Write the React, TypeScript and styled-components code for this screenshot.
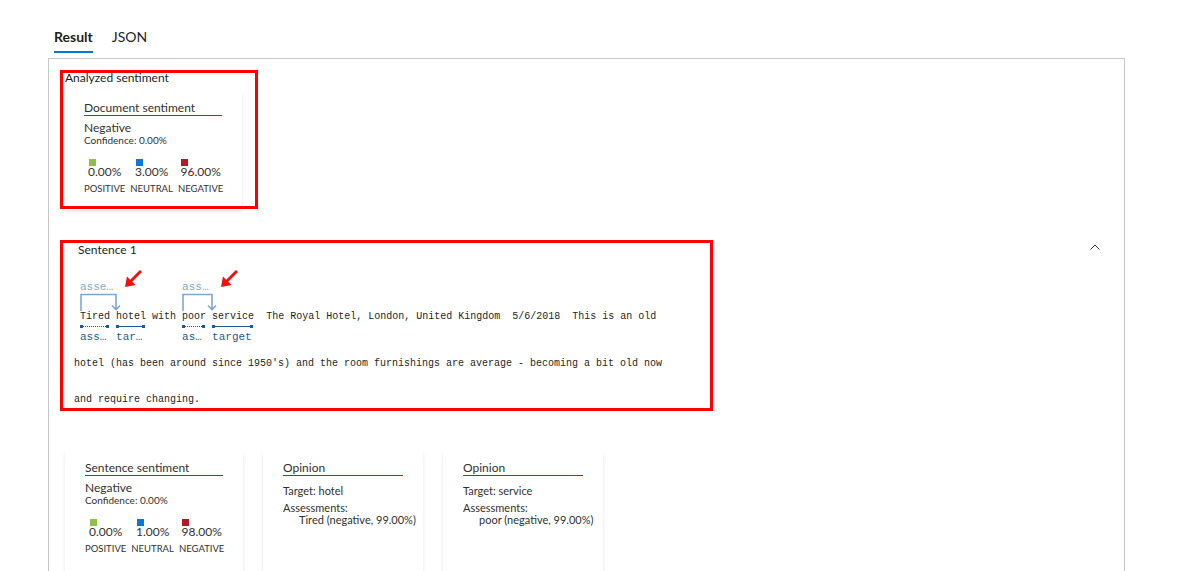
import styled, { createGlobalStyle } from 'styled-components';

const GlobalStyle = createGlobalStyle`
  body {
    margin: 0;
    background: #fff;
    color: #323130;
    font-family: Lato, "Open Sans", sans-serif;
  }
`;

interface Score {
  label: string;
  value: string;
  color: string;
}

const docScores: Score[] = [
  { label: 'POSITIVE', value: '0.00%', color: '#8cc24a' },
  { label: 'NEUTRAL', value: '3.00%', color: '#0b78d4' },
  { label: 'NEGATIVE', value: '96.00%', color: '#b01c24' },
];

const sentenceScores: Score[] = [
  { label: 'POSITIVE', value: '0.00%', color: '#8cc24a' },
  { label: 'NEUTRAL', value: '1.00%', color: '#0b78d4' },
  { label: 'NEGATIVE', value: '98.00%', color: '#b01c24' },
];

// monospace char width at 10px
const CHAR = 6;

const SentimentCard = ({ title, scores }: { title: string; scores: Score[] }) => (
  <Card width={178}>
    <CardTitle>{title}</CardTitle>
    <Verdict>Negative</Verdict>
    <Confidence>Confidence: 0.00%</Confidence>
    <Scores>
      {scores.map((s) => (
        <ScoreCol key={s.label}>
          <ScoreValue>
            <Swatch color={s.color} />
            <span>{s.value}</span>
          </ScoreValue>
          <ScoreLabel>{s.label}</ScoreLabel>
        </ScoreCol>
      ))}
    </Scores>
  </Card>
);

const OpinionCard = ({ target, assessment }: { target: string; assessment: string }) => (
  <Card width={160}>
    <CardTitle>Opinion</CardTitle>
    <Target>Target: {target}</Target>
    <AssessTitle>Assessments:</AssessTitle>
    <AssessItem>{assessment} (negative, 99.00%)</AssessItem>
  </Card>
);

const Token = ({ word, label, dotted }: { word: string; label: string; dotted?: boolean }) => (
  <TokenBox>
    <span>{word}</span>
    <Bar>
      <Dot />
      <BarLine dotted={dotted} />
      <Dot />
    </Bar>
    <TokenLabel width={word.length * CHAR}>{label}</TokenLabel>
  </TokenBox>
);

const Relation = ({ from, to }: { from: string; to: string }) => {
  const dx = from.length * CHAR + CHAR;
  return (
    <RelationBox>
      <RelLabel width={dx}>assessment</RelLabel>
      <Bracket width={dx + 6} height={18}>
        <path
          d={`M1 18 V1.5 H${dx} V16.5 M${dx - 4} 12.5 L${dx} 16.5 L${dx + 4} 12.5`}
          fill="none"
          stroke="#7ea8d2"
          strokeWidth={1.6}
        />
      </Bracket>
      <RelWords>
        <Token word={from} label="assessment" dotted />
        <span> </span>
        <Token word={to} label="target" />
      </RelWords>
      <Pointer offset={dx + 8} width={18} height={18} viewBox="0 0 18 18">
        <line x1={6} y1={12} x2={17} y2={1} stroke="#f01010" strokeWidth={3} />
        <polygon points="1,17 3,6.5 11.5,15" fill="#f01010" />
      </Pointer>
    </RelationBox>
  );
};

const App = () => {
  return (
    <>
      <GlobalStyle />
      <Page>
        <Tabs>
          <Tab active>Result</Tab>
          <Tab>JSON</Tab>
        </Tabs>
        <Panel>
          <Section>
            <Highlight left={-4} top={0} width={198} height={139} />
            <SectionHeading>Analyzed sentiment</SectionHeading>
            <SentimentCard title="Document sentiment" scores={docScores} />
          </Section>

          <SentenceSection>
            <Highlight left={-4} top={0} width={653} height={171} />
            <SentenceHeader>
              <span>Sentence 1</span>
              <Chevron width={10} height={6} viewBox="0 0 10 6">
                <polyline points="0.5,5.5 5,1 9.5,5.5" fill="none" stroke="#323130" strokeWidth={1} />
              </Chevron>
            </SentenceHeader>
            <MonoText>
              <FirstLine>
                <Plain> </Plain>
                <Relation from="Tired" to="hotel" />
                <Plain> with </Plain>
                <Relation from="poor" to="service" />
                <Plain>{'  The Royal Hotel, London, United Kingdom  5/6/2018  This is an old'}</Plain>
              </FirstLine>
              <Rest>
                hotel (has been around since 1950's) and the room furnishings are average - becoming a bit old now
                <br />
                and require changing.
              </Rest>
            </MonoText>
          </SentenceSection>

          <CardRow>
            <SentimentCard title="Sentence sentiment" scores={sentenceScores} />
            <OpinionCard target="hotel" assessment="Tired" />
            <OpinionCard target="service" assessment="poor" />
          </CardRow>
        </Panel>
      </Page>
    </>
  );
};

export default App;

const Page = styled.div`
  padding-top: 28px;
  height: 571px;
  overflow: hidden;
  box-sizing: border-box;
`;

const Tabs = styled.div`
  display: flex;
  gap: 19px;
  margin-left: 54px;
`;

const Tab = styled.div<{ active?: boolean }>`
  font-size: 14px;
  line-height: 18px;
  font-weight: ${({ active }) => (active ? 700 : 400)};
  color: #201f1e;
  padding-bottom: 5px;
  border-bottom: 2px solid ${({ active }) => (active ? '#0078d4' : 'transparent')};
`;

const Panel = styled.div`
  margin: 5px 0 0 48px;
  width: 1077px;
  box-sizing: border-box;
  border: 1px solid #c8c8c8;
  border-bottom: none;
  padding: 11px 0 40px 15px;
`;

const Section = styled.div`
  position: relative;
`;

// red annotation boxes drawn over the screenshot
const Highlight = styled.div<{ left: number; top: number; width: number; height: number }>`
  position: absolute;
  left: ${({ left }) => left}px;
  top: ${({ top }) => top}px;
  width: ${({ width }) => width}px;
  height: ${({ height }) => height}px;
  box-sizing: border-box;
  border: 3px solid #ff0000;
  pointer-events: none;
  z-index: 2;
`;

const SectionHeading = styled.div`
  font-size: 12px;
  line-height: 16px;
  color: #201f1e;
  margin: 0 0 6px 1px;
`;

const Card = styled.div<{ width: number }>`
  width: ${({ width }) => width}px;
  min-height: 118px;
  box-sizing: border-box;
  padding: 8px 20px 15px;
  background: #fff;
  box-shadow: 0 1.6px 3.6px rgba(0, 0, 0, 0.1), 0 0.3px 0.9px rgba(0, 0, 0, 0.08);
`;

const CardTitle = styled.div`
  font-size: 12px;
  line-height: 15px;
  color: #323130;
  border-bottom: 1px solid #1b5a98;
`;

const Verdict = styled.div`
  font-size: 12px;
  line-height: 13px;
  margin-top: 5px;
`;

const Confidence = styled.div`
  font-size: 10px;
  line-height: 12px;
`;

const Scores = styled.div`
  display: flex;
  gap: 5px;
  margin-top: 13px;
`;

const ScoreCol = styled.div`
  display: flex;
  flex-direction: column;
  align-items: center;
`;

const ScoreValue = styled.div`
  display: flex;
  flex-direction: column;
  align-items: flex-start;
  font-size: 12px;
  line-height: 12px;
`;

const Swatch = styled.div<{ color: string }>`
  width: 7px;
  height: 7px;
  margin-left: 1px;
  background: ${({ color }) => color};
`;

const ScoreLabel = styled.div`
  font-size: 9.5px;
  line-height: 12px;
  margin-top: 5px;
  white-space: nowrap;
`;

const Target = styled.div`
  font-size: 11px;
  line-height: 14px;
  margin-top: 8px;
`;

const AssessTitle = styled.div`
  font-size: 11px;
  line-height: 12px;
  margin-top: 4px;
`;

const AssessItem = styled.div`
  font-size: 11px;
  line-height: 12px;
  padding-left: 16px;
  white-space: nowrap;
`;

const SentenceSection = styled.div`
  position: relative;
  margin-top: 30px;
`;

const SentenceHeader = styled.div`
  display: flex;
  align-items: center;
  justify-content: space-between;
  padding: 2px 24px 0 14px;
  font-size: 12px;
  line-height: 16px;
  color: #201f1e;
`;

const Chevron = styled.svg`
  margin-top: -6px;
`;

const MonoText = styled.div`
  padding-left: 10px;
  margin-top: 24px;
  font-family: "Liberation Mono", "DejaVu Sans Mono", monospace;
  font-size: 10px;
  color: #1f1f1f;
`;

const FirstLine = styled.div`
  display: flex;
  align-items: flex-start;
  white-space: pre;
  line-height: 12px;
`;

const Plain = styled.span`
  padding-top: 29px;
`;

const RelationBox = styled.div`
  position: relative;
  display: flex;
  flex-direction: column;
`;

const RelLabel = styled.div<{ width: number }>`
  width: ${({ width }) => width}px;
  font-size: 11px;
  line-height: 11px;
  color: #7ea8d2;
  overflow: hidden;
  text-overflow: ellipsis;
  white-space: nowrap;
`;

const Bracket = styled.svg`
  display: block;
`;

const RelWords = styled.div`
  display: flex;
  align-items: flex-start;
`;

const Pointer = styled.svg<{ offset: number }>`
  position: absolute;
  top: -12px;
  left: ${({ offset }) => offset}px;
`;

const TokenBox = styled.div`
  display: flex;
  flex-direction: column;
`;

const Bar = styled.div`
  display: flex;
  align-items: center;
  width: calc(100% - 1px);
  height: 3px;
  margin-top: 2px;
`;

const Dot = styled.div`
  width: 3px;
  height: 3px;
  background: #1e5b96;
`;

const BarLine = styled.div<{ dotted?: boolean }>`
  flex: 1;
  border-top: 1px ${({ dotted }) => (dotted ? 'dotted' : 'solid')} #1e5b96;
`;

const TokenLabel = styled.div<{ width: number }>`
  width: ${({ width }) => width}px;
  margin-top: 3px;
  font-size: 11px;
  line-height: 12px;
  color: #1e5b96;
  overflow: hidden;
  text-overflow: ellipsis;
  white-space: nowrap;
`;

const Rest = styled.div`
  margin-top: 3px;
  line-height: 36px;
  white-space: pre;
`;

const CardRow = styled.div`
  display: flex;
  gap: 20px;
  margin: 34px 0 0 1px;
  > div {
    min-height: 130px;
  }
`;
